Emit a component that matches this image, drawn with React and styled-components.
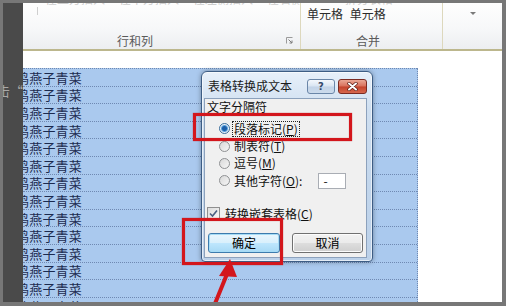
import React from 'react';
import styled, { createGlobalStyle } from 'styled-components';

const Global = createGlobalStyle`
  html, body { margin: 0; padding: 0; background: #767676; }
  body { font-family: "Noto Sans CJK SC", "Noto Sans", sans-serif; }
  * { box-sizing: border-box; }
`;

const Frame = styled.div`
  width: 506px;
  height: 306px;
  padding: 3px 4px 4px 3px;
  background: #777777;
  display: flex;
  overflow: hidden;
`;

const LeftStrip = styled.div`
  width: 20px;
  flex: none;
  background: #4a4a4a;
  padding-top: 79px;
  overflow: hidden;
  display: flex;
  flex-direction: column;
`;

const StripText = styled.div`
  display: flex;
  justify-content: flex-end;
  font-size: 13px;
  line-height: 18px;
  color: #a8a8a8;
  white-space: nowrap;
`;

const Main = styled.div`
  flex: 1;
  position: relative;
  display: flex;
  flex-direction: column;
  background: #ffffff;
  overflow: hidden;
`;

const Ribbon = styled.div`
  height: 48px;
  flex: none;
  display: flex;
  background: linear-gradient(#fefefe, #f7f8f9 55%, #eceef1);
  border-bottom: 2px solid #bcb78d;
`;

const Group = styled.div`
  width: ${p => (p.$w ? `${p.$w}px` : 'auto')};
  flex: ${p => (p.$w ? 'none' : '1')};
  display: flex;
  flex-direction: column;
  border-right: ${p => (p.$last ? 'none' : '1px solid #ddd8bd')};
`;

const TopClip = styled.div`
  height: 4px;
  overflow: hidden;
  display: flex;
  padding-left: ${p => p.$pl || 0}px;
  gap: 14px;
`;

const ClipText = styled.span`
  margin-top: -11px;
  font-size: 12px;
  line-height: 14px;
  color: #cdcdcd;
  white-space: nowrap;
`;

const GroupBody = styled.div`
  flex: 1;
  display: flex;
  align-items: flex-start;
  justify-content: ${p => p.$center ? 'center' : 'flex-start'};
  padding-left: ${p => p.$pl || 0}px;
`;

const TickLine = styled.div`
  width: 1px;
  height: 8px;
  background: #cfcfcf;
`;

const CellWords = styled.div`
  font-size: 12px;
  line-height: 14px;
  color: #2b2b2b;
  white-space: nowrap;
  word-spacing: 4px;
`;

const DropArrow = styled.div`
  margin-top: 5px;
  width: 0;
  height: 0;
  border-left: 3px solid transparent;
  border-right: 3px solid transparent;
  border-top: 3px solid #7a7a7a;
`;

const GroupLabelRow = styled.div`
  height: 18px;
  display: flex;
  align-items: center;
  justify-content: ${p => p.$center ? 'center' : 'flex-start'};
  padding-left: ${p => p.$pl || 0}px;
  padding-right: 7px;
  font-size: 12px;
  color: #5a5a5a;
`;

const Launcher = styled.svg`
  margin-left: auto;
  width: 7px;
  height: 7px;
`;

const Doc = styled.div`
  flex: 1;
  padding-top: 17px;
  overflow: hidden;
`;

const Table = styled.div`
  width: 395px;
  background: #aac9ee;
  border-right: 1px dotted #6f89b2;
  display: flex;
  flex-direction: column;
`;

const Row = styled.div`
  height: 17.6px;
  flex: none;
  border-top: 1px dotted #6f89b2;
  display: flex;
  align-items: center;
  font-size: 13px;
  color: #1b2a4f;
  white-space: nowrap;
`;

const RowText = styled.span`
  margin-left: -7px;
  letter-spacing: 0.2px;
`;

const Dialog = styled.div`
  position: absolute;
  left: 178px;
  top: 68px;
  width: 172px;
  height: 191px;
  border: 1px solid #3d5d84;
  border-radius: 6px 6px 4px 4px;
  background: linear-gradient(180deg, #e7f0fa, #cfdff0 20%, #c2d6ec 60%, #bcd1e9);
  box-shadow: 0 0 5px rgba(0, 0, 0, 0.35), inset 0 0 0 1px rgba(255,255,255,0.6);
  display: flex;
  flex-direction: column;
  padding: 0 5px 3px 2px;
`;

const TitleBar = styled.div`
  height: 26px;
  flex: none;
  display: flex;
  align-items: flex-start;
`;

const Title = styled.div`
  padding: 6px 0 0 4px;
  font-size: 12px;
  line-height: 16px;
  color: #1a1a1a;
  white-space: nowrap;
`;

const Caption = styled.div`
  margin-left: auto;
  margin-top: 7px;
  display: flex;
  gap: 3px;
`;

const CapBtn = styled.div`
  width: ${p => p.$w}px;
  height: 15px;
  border-radius: 3px;
  display: flex;
  align-items: center;
  justify-content: center;
  border: 1px solid ${p => (p.$close ? '#7a2b22' : '#6a86a8')};
  background: ${p =>
    p.$close
      ? 'linear-gradient(#eaa795, #d8705b 48%, #c4432c 52%, #d6674d)'
      : 'linear-gradient(#f4f8fc, #d9e5f2 48%, #c2d3e7 52%, #ccdbec)'};
  font-family: "DejaVu Sans", sans-serif;
  font-weight: bold;
  font-size: 10px;
  color: #34496b;
`;

const Content = styled.div`
  flex: 1;
  background: #f0f0f0;
  border: 1px solid #8ca1bc;
  padding: 0 0 0 2px;
  display: flex;
  flex-direction: column;
  font-size: 12px;
  color: #111;
`;

const Heading = styled.div`
  line-height: 16px;
  height: 16px;
  white-space: nowrap;
`;

const RadioList = styled.div`
  margin-top: 5px;
  display: flex;
  flex-direction: column;
`;

const OptRow = styled.div`
  height: 17.4px;
  display: flex;
  align-items: center;
  padding-left: 12px;
  white-space: nowrap;
`;

const Radio = styled.span`
  width: 11px;
  height: 11px;
  flex: none;
  border-radius: 50%;
  border: 1px solid ${p => (p.$on ? '#3a6e9c' : '#8f9193')};
  background: ${p =>
    p.$on
      ? 'radial-gradient(circle, #1d5fa8 0 2px, #5aa0dc 3px, #e8f1fa 4px, #f6f8fa)'
      : 'linear-gradient(135deg, #d8d8d8, #f6f6f6)'};
  margin-right: 3px;
`;

const OptLabel = styled.span`
  line-height: 14px;
  padding: 0 1px;
  outline: ${p => (p.$focus ? '1px dotted #222' : 'none')};
`;

const Key = styled.span`
  text-decoration: underline;
`;

const SmallInput = styled.div`
  margin-left: 15px;
  width: 28px;
  height: 16px;
  background: #fff;
  border: 1px solid #a9adb4;
  font-size: 12px;
  line-height: 14px;
  padding-left: 4px;
  color: #111;
`;

const CheckRow = styled.div`
  margin-top: 15px;
  height: 17px;
  display: flex;
  align-items: center;
  white-space: nowrap;
  gap: 5px;
`;

const CheckBox = styled.span`
  width: 13px;
  height: 13px;
  flex: none;
  border: 1px solid #8f8f8f;
  background: linear-gradient(135deg, #dcdcdc, #f8f8f8);
  display: flex;
  align-items: center;
  justify-content: center;
`;

const BtnRow = styled.div`
  margin-top: 11px;
  padding-left: 1px;
  display: flex;
  gap: 12px;
`;

const Btn = styled.div`
  width: ${p => p.$w}px;
  height: 20px;
  border-radius: 3px;
  border: 1px solid ${p => (p.$def ? '#3d7bad' : '#707070')};
  background: ${p =>
    p.$def
      ? 'linear-gradient(#eaf6fd, #d9f0fc 48%, #bee6fd 52%, #a7d9f5)'
      : 'linear-gradient(#f2f2f2, #ebebeb 48%, #dddddd 52%, #cfcfcf)'};
  box-shadow: inset 0 0 0 1px ${p => (p.$def ? '#a6dcf5' : '#fcfcfc')};
  display: flex;
  align-items: center;
  justify-content: center;
  font-size: 12px;
  color: #000;
`;

const RedBox = styled.div`
  position: absolute;
  left: ${p => p.$l}px;
  top: ${p => p.$t}px;
  width: ${p => p.$w}px;
  height: ${p => p.$h}px;
  border: 3.5px solid #d3161c;
  box-shadow: 0 0 1px rgba(180, 0, 0, 0.7), inset 0 0 1px rgba(180, 0, 0, 0.7);
`;

const Arrow = styled.svg`
  position: absolute;
  left: 180px;
  top: 250px;
  width: 40px;
  height: 56px;
`;

const rows = Array.from({ length: 14 });

export default function App() {
  return (
    <>
      <Global />
      <Frame>
        <LeftStrip>
          <StripText><span>点击“</span></StripText>
        </LeftStrip>
        <Main>
          <Ribbon>
            <Group $w={278}>
              <TopClip $pl={22}>
                <ClipText>在上方插入</ClipText>
                <ClipText>在下方插入</ClipText>
                <ClipText>在左侧插入</ClipText>
                <ClipText>在右侧插入</ClipText>
              </TopClip>
              <GroupBody $pl={14}>
                <TickLine />
              </GroupBody>
              <GroupLabelRow $pl={94}>
                行和列
                <Launcher viewBox="0 0 7 7">
                  <path d="M0.5 6.5 V0.5 H6.5" fill="none" stroke="#9a9a9a" strokeWidth="1" />
                  <path d="M2.5 2.5 L6 6 M3.5 6 H6 V3.5" fill="none" stroke="#7d7d7d" strokeWidth="1" />
                </Launcher>
              </GroupLabelRow>
            </Group>
            <Group $w={142}>
              <TopClip $pl={44}>
                <ClipText>拆分表格</ClipText>
              </TopClip>
              <GroupBody $pl={6}>
                <CellWords>单元格 单元格</CellWords>
              </GroupBody>
              <GroupLabelRow $center>合并</GroupLabelRow>
            </Group>
            <Group $last>
              <TopClip />
              <GroupBody $center>
                <DropArrow />
              </GroupBody>
              <GroupLabelRow />
            </Group>
          </Ribbon>
          <Doc>
            <Table>
              {rows.map((_, i) => (
                <Row key={i}>
                  <RowText>鸡燕子青菜</RowText>
                </Row>
              ))}
            </Table>
          </Doc>

          <Dialog>
            <TitleBar>
              <Title>表格转换成文本</Title>
              <Caption>
                <CapBtn $w={28}>?</CapBtn>
                <CapBtn $w={29} $close>
                  <svg width="11" height="9" viewBox="0 0 11 9">
                    <path d="M2 1.5 L9 7.5 M9 1.5 L2 7.5" stroke="#5a1a12" strokeWidth="3.4" strokeLinecap="round" />
                    <path d="M2 1.5 L9 7.5 M9 1.5 L2 7.5" stroke="#ffffff" strokeWidth="2" strokeLinecap="round" />
                  </svg>
                </CapBtn>
              </Caption>
            </TitleBar>
            <Content>
              <Heading>文字分隔符</Heading>
              <RadioList>
                <OptRow>
                  <Radio $on />
                  <OptLabel $focus>段落标记(<Key>P</Key>)</OptLabel>
                </OptRow>
                <OptRow>
                  <Radio />
                  <OptLabel>制表符(<Key>T</Key>)</OptLabel>
                </OptRow>
                <OptRow>
                  <Radio />
                  <OptLabel>逗号(<Key>M</Key>)</OptLabel>
                </OptRow>
                <OptRow>
                  <Radio />
                  <OptLabel>其他字符(<Key>O</Key>):</OptLabel>
                  <SmallInput>-</SmallInput>
                </OptRow>
              </RadioList>
              <CheckRow>
                <CheckBox>
                  <svg width="9" height="9" viewBox="0 0 9 9">
                    <path d="M1 4.5 L3.5 7 L8 1.5" fill="none" stroke="#4a5f80" strokeWidth="1.6" />
                  </svg>
                </CheckBox>
                <span>转换嵌套表格(<Key>C</Key>)</span>
              </CheckRow>
              <BtnRow>
                <Btn $w={72} $def>确定</Btn>
                <Btn $w={71}>取消</Btn>
              </BtnRow>
            </Content>
          </Dialog>

          <RedBox $l={170} $t={110} $w={159} $h={28} />
          <RedBox $l={159} $t={215} $w={101} $h={47} />
          <Arrow viewBox="0 0 40 56">
            <path d="M24 21 L9 58" stroke="#d3161c" strokeWidth="4" strokeLinecap="butt" />
            <polygon points="27,6 16,23 34,24" fill="#d3161c" />
          </Arrow>
        </Main>
      </Frame>
    </>
  );
}
